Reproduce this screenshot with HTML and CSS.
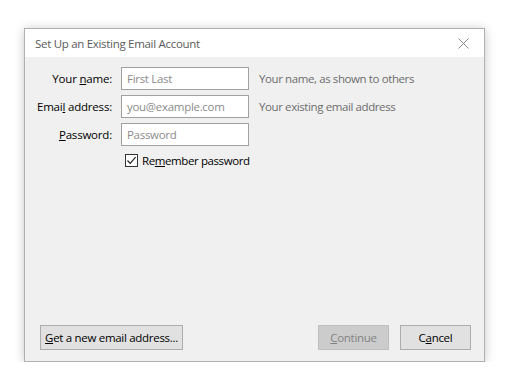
FILE: index.html
```html
<!DOCTYPE html>
<html>
<head>
<meta charset="utf-8">
<link rel="stylesheet" href="styles.css">
</head>
<body>
<div class="window">
  <div class="titlebar">
    <span class="title">Set Up an Existing Email Account</span>
    <svg class="close" width="11" height="11" viewBox="0 0 11 11"><path d="M0.5 0.5 L10.5 10.5 M10.5 0.5 L0.5 10.5" stroke="#8a8a8a" stroke-width="1" fill="none"/></svg>
  </div>
  <div class="content">
    <div class="form">
      <label class="lbl">Your <u>n</u>ame:</label>
      <div class="input placeholder">First Last</div>
      <span class="hint">Your name, as shown to others</span>

      <label class="lbl">Emai<u>l</u> address:</label>
      <div class="input placeholder">you@example.com</div>
      <span class="hint">Your existing email address</span>

      <label class="lbl"><u>P</u>assword:</label>
      <div class="input placeholder">Password</div>
      <span class="hint"></span>

      <span></span>
      <div class="check-row">
        <span class="checkbox"><svg width="11" height="11" viewBox="0 0 11 11"><path d="M1.5 5.5 L4.2 8.3 L9.6 2.2" stroke="#222" stroke-width="1.2" fill="none"/></svg></span>
        <span class="check-label">Re<u>m</u>ember password</span>
      </div>
    </div>
    <div class="footer">
      <button class="btn btn-wide"><u>G</u>et a new email address...</button>
      <div class="right">
        <button class="btn disabled"><u>C</u>ontinue</button>
        <button class="btn">C<u>a</u>ncel</button>
      </div>
    </div>
  </div>
</div>
</body>
</html>
```

FILE: styles.css
```css
html, body {
  margin: 0;
  background: #ffffff;
}
body {
  padding: 28px 0 0 24px;
  font-family: "Open Sans", "Noto Sans", sans-serif;
  font-size: 11.5px;
  color: #000;
}
.window {
  width: 461px;
  height: 334px;
  box-sizing: border-box;
  border: 1px solid #b0b0b0;
  background: #f0f0f0;
  box-shadow: 0 1px 10px rgba(0,0,0,0.22);
  display: flex;
  flex-direction: column;
}
.titlebar {
  height: 28px;
  flex: none;
  background: #ffffff;
  display: flex;
  align-items: center;
  justify-content: space-between;
  padding: 0 15px 0 10px;
}
.title {
  color: #5a5a5a;
  font-size: 11.5px;
  letter-spacing: -0.3px;
}
.content {
  flex: 1;
  display: flex;
  flex-direction: column;
  justify-content: space-between;
  padding: 10px 13px 11px 0;
}
.form {
  display: grid;
  grid-template-columns: 87px 128px auto;
  grid-auto-rows: 23px;
  row-gap: 5px;
  align-items: center;
}
.lbl {
  grid-column: 1;
  text-align: right;
  letter-spacing: -0.2px;
  white-space: nowrap;
}
.input {
  grid-column: 2;
  margin-left: 9px;
  width: 128px;
  height: 23px;
  box-sizing: border-box;
  border: 1px solid #a0a0a0;
  background: #fff;
  padding: 0 0 0 5px;
  display: flex;
  align-items: center;
  letter-spacing: -0.3px;
  white-space: nowrap;
  overflow: hidden;
}
.placeholder {
  color: #8c8c8c;
}
.hint {
  margin-left: 19px;
  color: #6d6d6d;
  letter-spacing: -0.4px;
  white-space: nowrap;
}
.check-row {
  grid-column: 2 / span 2;
  margin-left: 13px;
  display: flex;
  align-items: center;
  gap: 4px;
  white-space: nowrap;
  margin-top: -4px;
}
.checkbox {
  width: 13px;
  height: 13px;
  box-sizing: border-box;
  border: 1px solid #333;
  background: #fff;
  display: flex;
  align-items: center;
  justify-content: center;
}
.check-label {
  letter-spacing: -0.4px;
}
.footer {
  display: flex;
  justify-content: space-between;
  padding-left: 15px;
}
.right {
  display: flex;
  gap: 11px;
}
.btn {
  height: 25px;
  width: 71px;
  box-sizing: border-box;
  border: 1px solid #adadad;
  background: #e1e1e1;
  font-family: inherit;
  font-size: 11.5px;
  letter-spacing: -0.3px;
  color: #000;
  padding: 0;
}
.btn-wide {
  width: 143px;
}
.btn.disabled {
  background: #cccccc;
  border-color: #bfbfbf;
  color: #838383;
}
```
